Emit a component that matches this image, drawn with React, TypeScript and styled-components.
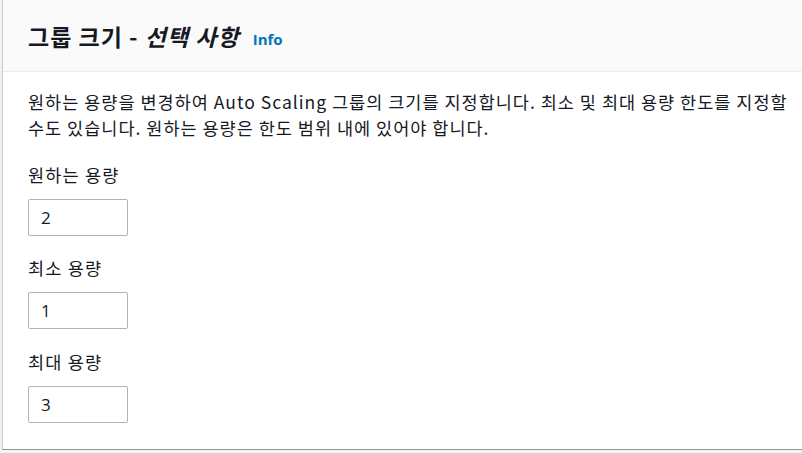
import React from "react";
import styled, { createGlobalStyle } from "styled-components";

const Global = createGlobalStyle`
  html, body { margin: 0; padding: 0; background: #f2f3f3; overflow: hidden; }
  body { font-family: "Noto Sans CJK KR", "Noto Sans", sans-serif; color: #16191f; }
`;

const Panel = styled.section`
  margin-left: 2px;
  width: 800px;
  background: #ffffff;
  border-left: 1px solid #c9cfd0;
  border-bottom: 1px solid #8d9596;
  box-shadow: 0 1px 1px 0 rgba(0, 28, 36, 0.15);
`;

const Header = styled.header`
  height: 72px;
  box-sizing: border-box;
  background: #fafafa;
  border-bottom: 1px solid #eaeded;
  display: flex;
  align-items: center;
  padding-left: 25px;
  gap: 13px;
`;

const Title = styled.h2`
  margin: 0;
  font-size: 23px;
  font-weight: 700;
  letter-spacing: 1px;
  line-height: 30px;
  color: #16191f;
`;

const Optional = styled.em`
  font-style: italic;
`;

const InfoLink = styled.a`
  font-size: 15px;
  font-weight: 700;
  color: #0073bb;
  text-decoration: none;
  margin-top: 6px;
  font-family: "Open Sans", "Noto Sans", sans-serif;
`;

const Body = styled.div`
  padding: 17px 10px 26px 25px;
  display: flex;
  flex-direction: column;
  gap: 24.5px;
`;

const Description = styled.p`
  margin: 0 0 1px 0;
  font-size: 17.5px;
  line-height: 26px;
  letter-spacing: 1px;
  max-width: 765px;
  word-break: keep-all;
`;

const Field = styled.div`
  display: flex;
  flex-direction: column;
  gap: 13px;
`;

const Label = styled.label`
  font-size: 17.5px;
  line-height: 20px;
  letter-spacing: 1.2px;
  margin-top: -2px;
  margin-bottom: 1px;
`;

const Input = styled.input`
  width: 100px;
  height: 37px;
  box-sizing: border-box;
  border: 1px solid #aab7b8;
  border-radius: 2px;
  padding: 0 12px;
  font-family: "Open Sans", "Noto Sans", sans-serif;
  font-size: 17px;
  color: #16191f;
  background: #fff;
  outline: none;
`;

const fields = [
  { label: "원하는 용량", value: "2" },
  { label: "최소 용량", value: "1" },
  { label: "최대 용량", value: "3" },
];

export default function App() {
  return (
    <>
      <Global />
      <Panel>
        <Header>
          <Title>
            그룹 크기 - <Optional>선택 사항</Optional>
          </Title>
          <InfoLink href="#">Info</InfoLink>
        </Header>
        <Body>
          <Description>
            원하는 용량을 변경하여 Auto Scaling 그룹의 크기를 지정합니다. 최소 및 최대 용량 한도를 지정할 수도 있습니다. 원하는 용량은 한도 범위 내에 있어야 합니다.
          </Description>
          {fields.map((f) => (
            <Field key={f.label}>
              <Label>{f.label}</Label>
              <Input defaultValue={f.value} />
            </Field>
          ))}
        </Body>
      </Panel>
    </>
  );
}
